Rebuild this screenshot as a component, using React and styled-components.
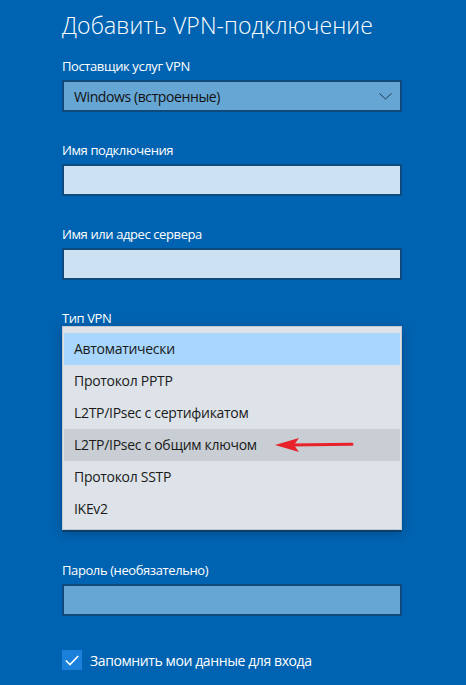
import React from 'react';
import styled, { createGlobalStyle } from 'styled-components';

const GlobalStyle = createGlobalStyle`
  html, body {
    margin: 0;
    padding: 0;
    background: #0063b1;
  }
  body {
    font-family: "Open Sans", "Noto Sans", "Liberation Sans", sans-serif;
  }
`;

// fields 5 and 6 sit under the open list, so they carry no text
const fields = [
  { label: 'Поставщик услуг VPN', kind: 'select', value: 'Windows (встроенные)' },
  { label: 'Имя подключения', kind: 'input' },
  { label: 'Имя или адрес сервера', kind: 'input' },
  { label: 'Тип VPN', kind: 'select', value: '', open: true },
  { label: '', kind: 'select', value: '' },
  { label: '', kind: 'input' },
  { label: 'Пароль (необязательно)', kind: 'input', dim: true },
];

const vpnTypes = [
  'Автоматически',
  'Протокол PPTP',
  'L2TP/IPsec с сертификатом',
  'L2TP/IPsec с общим ключом',
  'Протокол SSTP',
  'IKEv2',
];

const Chevron = () => (
  <svg width="13" height="7" viewBox="0 0 13 7">
    <path d="M0.5 0.5 L6.5 6 L12.5 0.5" fill="none" stroke="#1d3a52" strokeWidth="1" />
  </svg>
);

const RedArrow = () => (
  <svg width="80" height="16" viewBox="0 0 80 16">
    <path d="M16 8 L77 7.2" stroke="#e8222b" strokeWidth="3" strokeLinecap="round" />
    <path d="M0 8 L24 1 L19 8 L24 15 Z" fill="#e8222b" />
  </svg>
);

const App = () => {
  return (
    <Page>
      <GlobalStyle />
      <Title>Добавить VPN-подключение</Title>
      {fields.map((field, index) => (
        <Field key={index}>
          <Label>{field.label}</Label>
          {field.kind === 'select' ? (
            <Select>
              <span>{field.value}</span>
              <Chevron />
            </Select>
          ) : (
            <Input $dim={field.dim} />
          )}
          {field.open && (
            <Menu>
              {vpnTypes.map((type, i) => (
                <MenuItem key={type} $selected={i === 0} $hover={i === 3}>
                  {type}
                  {i === 3 && (
                    <ArrowMark>
                      <RedArrow />
                    </ArrowMark>
                  )}
                </MenuItem>
              ))}
            </Menu>
          )}
        </Field>
      ))}
      <Remember>
        <CheckBox>
          <svg width="14" height="11" viewBox="0 0 14 11">
            <path d="M0.8 5.5 L5 9.6 L13.2 1" fill="none" stroke="#ffffff" strokeWidth="1.6" />
          </svg>
        </CheckBox>
        <span>Запомнить мои данные для входа</span>
      </Remember>
    </Page>
  );
};

const Page = styled.div`
  width: 466px;
  height: 685px;
  overflow: hidden;
  box-sizing: border-box;
  padding: 8px 64px 0 62px;
  background: #0063b1;
  color: #ffffff;
`;

const Title = styled.h1`
  margin: 0 0 18px;
  font-size: 23px;
  font-weight: 300;
  line-height: 34px;
  letter-spacing: 0.1px;
  white-space: nowrap;
`;

const Field = styled.div`
  position: relative;
  height: 84px;
  display: flex;
  flex-direction: column;
`;

const Label = styled.div`
  height: 20px;
  font-size: 13px;
  line-height: 12px;
  letter-spacing: -0.4px;
  color: #ffffff;
  white-space: nowrap;
`;

const Select = styled.div`
  height: 32px;
  box-sizing: border-box;
  border: 2px solid #0e4a7c;
  background: #66a6d4;
  display: flex;
  align-items: center;
  justify-content: space-between;
  padding: 0 8px 0 10px;
  color: #111111;
  font-size: 14px;
  letter-spacing: -0.4px;
`;

const Input = styled.div`
  height: 32px;
  box-sizing: border-box;
  border: 2px solid #0e4a7c;
  background: ${(p) => (p.$dim ? '#66a6d4' : '#cce1f1')};
`;

const Menu = styled.div`
  position: absolute;
  left: 0;
  right: 0;
  top: 14px;
  z-index: 2;
  box-sizing: border-box;
  padding: 6px 0 4px;
  background: #dde3e8;
  border: 1px solid #c2c8cd;
  box-shadow: 0 3px 10px rgba(0, 30, 60, 0.35);
`;

const MenuItem = styled.div`
  position: relative;
  height: 32px;
  margin: 0 1px;
  padding-left: 10px;
  padding-bottom: 2px;
  box-sizing: border-box;
  display: flex;
  align-items: center;
  font-size: 14px;
  letter-spacing: -0.3px;
  color: #1a1a1a;
  background: ${(p) => (p.$selected ? '#a8d6fc' : p.$hover ? '#c8ced3' : 'transparent')};
`;

const ArrowMark = styled.div`
  position: absolute;
  left: 211px;
  top: 8px;
  display: flex;
`;

const Remember = styled.div`
  display: flex;
  align-items: center;
  gap: 8px;
  margin-top: 2px;
  font-size: 14px;
  letter-spacing: -0.4px;
  color: #ffffff;
`;

const CheckBox = styled.div`
  width: 20px;
  height: 20px;
  background: #1b80d9;
  display: flex;
  align-items: center;
  justify-content: center;
`;

export default App;
